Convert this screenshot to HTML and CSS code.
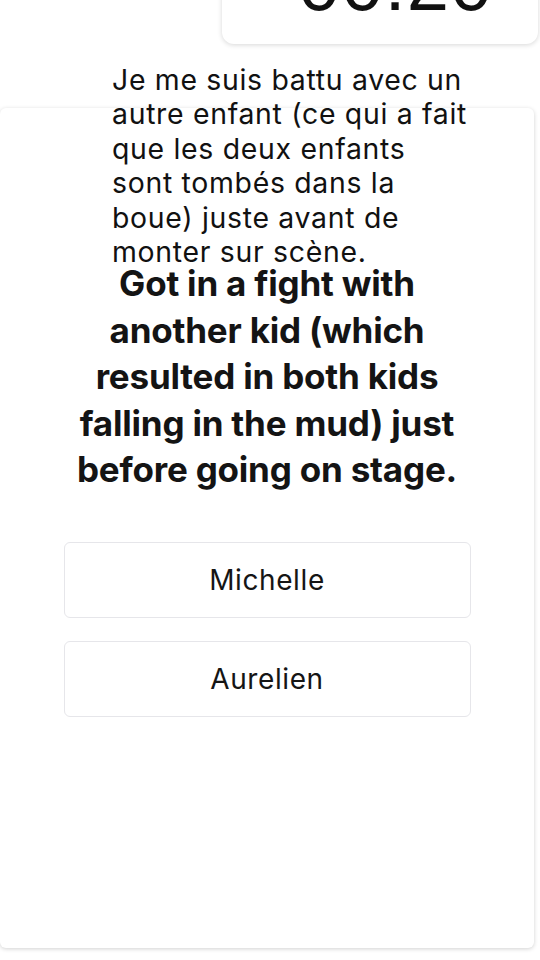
FILE: index.html
```html
<!DOCTYPE html>
<html lang="fr">
<head>
    <meta charset="UTF-8">
    <meta name="viewport" content="width=device-width, initial-scale=1.0">
    <title>Quiz</title>
    <link rel="stylesheet" href="styles.css">
</head>
<body>
    <!-- Minuteur -->
    <div class="timer-row">
        <div class="timer">00:20</div>
    </div>

    <!-- Carte de la question -->
    <div class="card">
        <p class="translation">Je me suis battu avec un autre enfant (ce qui a fait que les deux enfants sont tombés dans la boue) juste avant de monter sur scène.</p>
        <h2 class="question">Got in a fight with another kid (which resulted in both kids falling in the mud) just before going on stage.</h2>
        <div class="answers">
            <button class="answer">Michelle</button>
            <button class="answer">Aurelien</button>
        </div>
    </div>
</body>
</html>
```

FILE: styles.css
```css
/* Gaya umum */
* { box-sizing: border-box; }

body {
    margin: 0;
    background: #fff;
    color: #141414;
    font-family: Inter, "Liberation Sans", sans-serif;
    height: 960px;
    overflow: hidden;
}

/* Minuteur */
.timer-row {
    display: flex;
    justify-content: flex-end;
    padding-right: 2px;
}
.timer {
    width: 316px;
    height: 100px;
    margin-top: -56px;
    padding-left: 76px;
    background: #fff;
    border-radius: 0 0 12px 12px;
    box-shadow: 0 1px 5px rgba(0, 0, 0, 0.16);
    font-family: "Liberation Sans", sans-serif;
    font-size: 76px;
    line-height: 80px;
    letter-spacing: 1px;
    color: #111;
}

/* Carte */
.card {
    position: relative;
    width: 534px;
    height: 840px;
    margin-top: 64px;
    padding-top: 152px;
    background: #fff;
    border-radius: 6px;
    box-shadow: 0 1px 4px rgba(0, 0, 0, 0.18);
}

.translation {
    position: absolute;
    top: -45px;
    left: 112px;
    width: 358px;
    margin: 0;
    font-family: Inter, "Liberation Sans", sans-serif;
    font-size: 28.4px;
    line-height: 34.4px;
    letter-spacing: 0.7px;
    color: #111;
}

.question {
    margin: 0 auto;
    width: 400px;
    text-align: center;
    font-size: 35px;
    font-weight: 700;
    line-height: 46.6px;
    letter-spacing: -0.2px;
}

.answers {
    display: flex;
    flex-direction: column;
    gap: 23px;
    width: 407px;
    margin: 49px auto 0;
}
.answer {
    height: 76px;
    background: #fff;
    border: 1.5px solid #e6e6ea;
    border-radius: 6px;
    font-family: Inter, "Liberation Sans", sans-serif;
    font-size: 28px;
    letter-spacing: 0.6px;
    color: #151515;
}
```
